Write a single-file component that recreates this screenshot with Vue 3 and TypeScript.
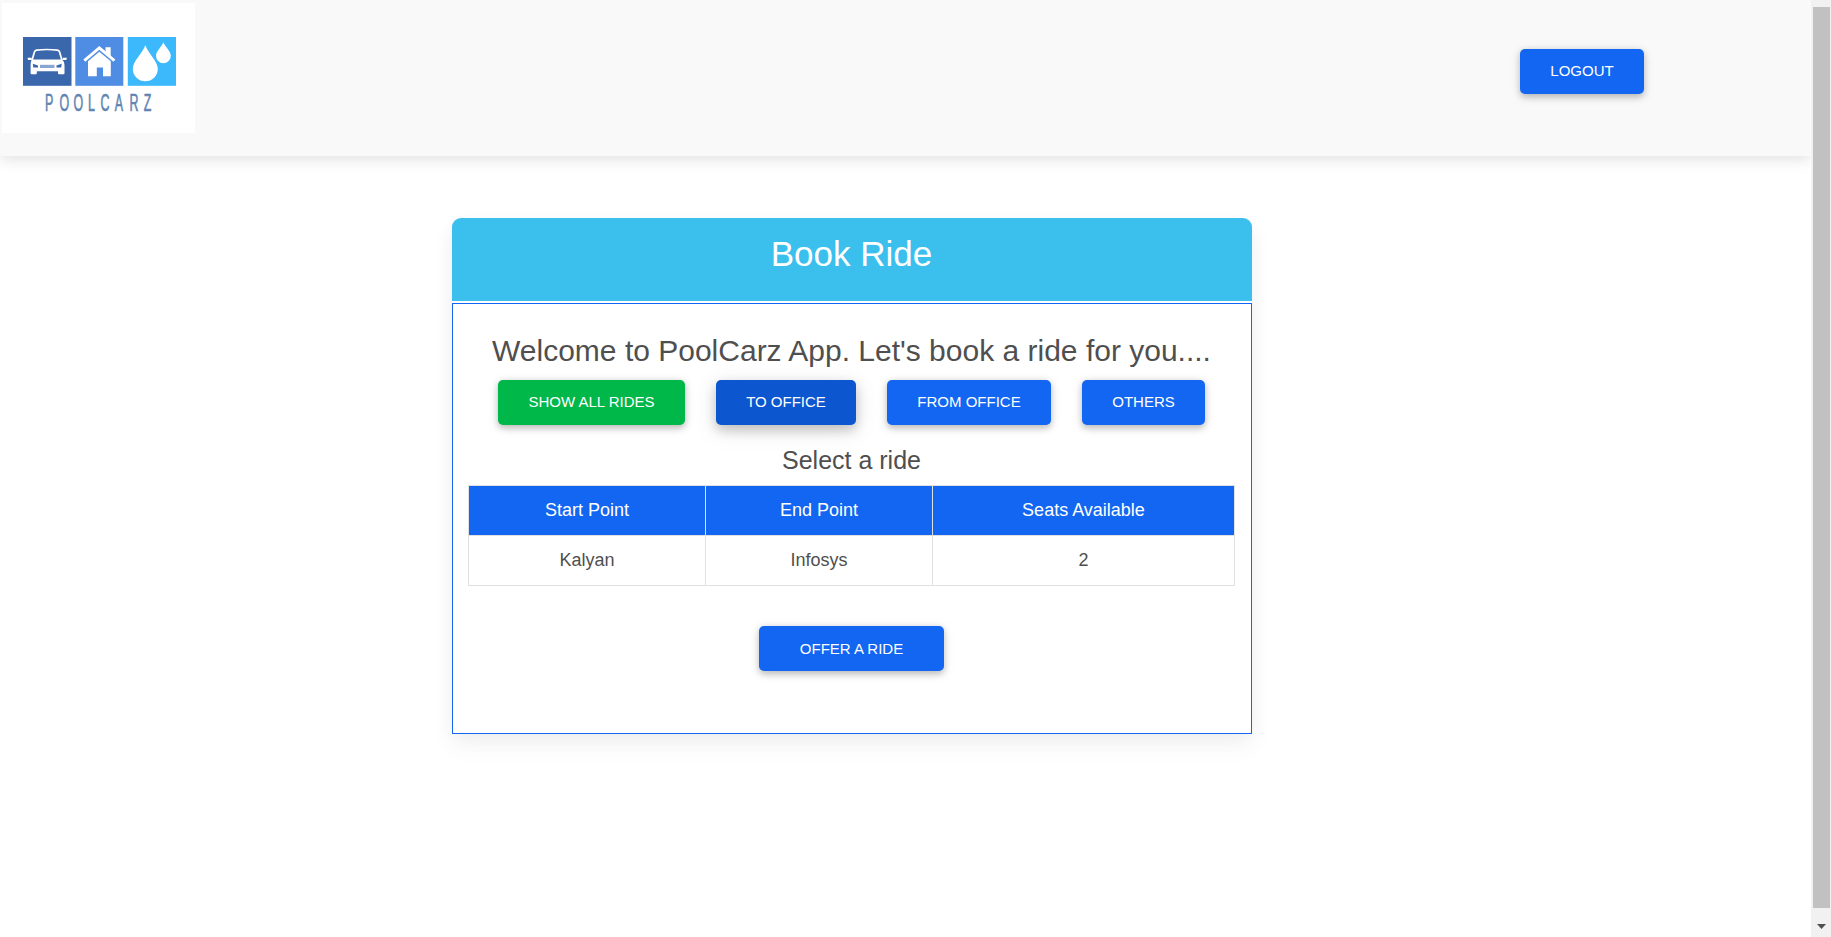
<script setup lang="ts">
interface Ride {
  start: string
  end: string
  seats: number
}

interface Filter {
  label: string
  kind: string
}

const filters: Filter[] = [
  { label: 'Show all rides', kind: 'success' },
  { label: 'To Office', kind: 'active' },
  { label: 'From Office', kind: 'primary' },
  { label: 'Others', kind: 'primary' },
]

const rides: Ride[] = [{ start: 'Kalyan', end: 'Infosys', seats: 2 }]
</script>

<template>
  <div class="screen">
    <div class="page">
      <header class="navbar">
        <svg class="logo" viewBox="0 0 193 130" width="193" height="130">
          <rect width="193" height="130" fill="#fff" />
          <g transform="translate(-2 -3)">
            <rect x="23" y="37" width="48.5" height="48.8" fill="#3a67ac" />
            <rect x="75.3" y="37" width="48" height="48.8" fill="#4f8ce3" />
            <rect x="127.8" y="37" width="48.2" height="48.8" fill="#3bb9fc" />
            <path
              d="M32 60.500 34.400 52Q34.900 50.300 36.600 50.100Q47 48.900 57.400 50.100Q59.100 50.300 59.600 52L62 60.500"
              fill="none" stroke="#fff" stroke-width="1.700"
            />
            <path
              d="M27.500 57.800h4.200v2.200h-3.600zM66.900 57.800h-4.200v2.200h3.600zM32 59.500h30q2.500 2 2.500 5.500v8.200q0 1-1 1h-4.500q-1 0-1-1v-1.900H36.800v1.900q0 1-1 1h-4.200q-1 0-1-1V65q0-3.500 1.400-5.500z"
              fill="#fff"
            />
            <path d="M32.800 63.700l5.200 1.700v2.200h-4.700zM61.700 63.700l-5.200 1.700v2.200h4.700z" fill="#3a67ac" />
            <path d="M40 64.800h14.500v3.200H40z" fill="#8aa6d0" />
            <path d="M84.300 60.600 99.300 48 114.400 60.600" fill="none" stroke="#fff" stroke-width="2.900" />
            <path d="M105.500 47.200h5.200v10l-5.200-4.400zM88 61.300 99.300 51.800l11.500 9.500v15H103v-8.800h-6.200v8.800H88z" fill="#fff" />
            <path d="M145.300 45.200C148.500 54 157.800 61 157.800 69a12.500 12.200 0 0 1-25 0c0-8 9.300-15 12.500-23.800z" fill="#fff" />
            <path d="M163.400 42.300c1.700 4.800 7.400 8.700 7.400 13.500a7.400 7.400 0 0 1-14.800 0c0-4.800 5.700-8.700 7.400-13.500z" fill="#fff" />
            <text
              transform="translate(45 110.500) scale(.54 1)"
              x="0 27 53 79.500 103 129 156.500 183" y="0"
              class="logo-text"
            >POOLCARZ</text>
          </g>
        </svg>
        <button type="button" class="btn primary logout">Logout</button>
      </header>

      <main class="card">
        <h2 class="card-title">Book Ride</h2>
        <section class="card-body">
          <h3 class="welcome">Welcome to PoolCarz App. Let's book a ride for you....</h3>
          <div class="filters">
            <button v-for="f in filters" :key="f.label" type="button" class="btn" :class="f.kind">{{ f.label }}</button>
          </div>
          <h4 class="subtitle">Select a ride</h4>
          <table class="rides">
            <colgroup>
              <col class="col-start" />
              <col class="col-end" />
              <col />
            </colgroup>
            <thead>
              <tr>
                <th>Start Point</th>
                <th>End Point</th>
                <th>Seats Available</th>
              </tr>
            </thead>
            <tbody>
              <tr v-for="r in rides" :key="r.start">
                <td>{{ r.start }}</td>
                <td>{{ r.end }}</td>
                <td>{{ r.seats }}</td>
              </tr>
            </tbody>
          </table>
          <button type="button" class="btn primary offer">Offer a ride</button>
        </section>
      </main>
    </div>

    <div class="scrollbar">
      <div class="thumb"></div>
      <svg class="arrow" width="9" height="5" viewBox="0 0 9 5"><path d="M0 0h9L4.500 5z" fill="#505050" /></svg>
    </div>
  </div>
</template>

<style>
body {
  margin: 0;
  background: #fff;
}
</style>

<style scoped>
.screen {
  display: grid;
  grid-template-columns: 1811px 20px;
  height: 937px;
  overflow: hidden;
  color: #4f4f4f;
  font-family: Arial, 'Liberation Sans', sans-serif;
}
.page {
  overflow: hidden;
}
.navbar {
  display: flex;
  align-items: flex-start;
  justify-content: space-between;
  box-sizing: border-box;
  height: 156px;
  padding: 3px 167px 0 2px;
  background: #f9f9f9;
  box-shadow: 0 5px 15px 0 rgba(0, 0, 0, 0.07), 0 2px 12px 0 rgba(0, 0, 0, 0.05);
}
.logo {
  display: block;
}
.logo-text {
  font-family: 'Liberation Sans', Arial, sans-serif;
  font-size: 23px;
  fill: #5d83b1;
  stroke: #5d83b1;
  stroke-width: 0.6px;
}
.btn {
  box-sizing: border-box;
  height: 45px;
  padding: 0 30px 1px;
  border: 0;
  border-radius: 5px;
  color: #fff;
  font-family: inherit;
  font-size: 15px;
  line-height: 44px;
  text-align: center;
  text-transform: uppercase;
  white-space: nowrap;
  box-shadow: 0 2.5px 6px 0 rgba(0, 0, 0, 0.2), 0 2.5px 12px 0 rgba(0, 0, 0, 0.1);
}
.primary {
  background: #1266f1;
}
.success {
  background: #00b74a;
}
.active {
  background: #0c56d0;
  box-shadow: 0 5px 12px 0 rgba(0, 0, 0, 0.2), 0 5px 25px 0 rgba(0, 0, 0, 0.1);
}
.logout {
  margin-top: 46px;
  width: 124px;
}
.card {
  width: 800px;
  margin: 62px 0 0 452px;
  border-radius: 10px 10px 0 0;
  box-shadow: 0 12px 25px 0 rgba(0, 0, 0, 0.05), 0 2px 18px 0 rgba(0, 0, 0, 0.03);
}
.card-title {
  box-sizing: border-box;
  height: 83px;
  margin: 0;
  padding: 15px 1px 0 0;
  border-radius: 9px 9px 0 0;
  background: #3bc0ee;
  color: #fff;
  font-size: 35px;
  font-weight: 400;
  line-height: 42px;
  text-align: center;
}
.card-body {
  display: flex;
  flex-direction: column;
  align-items: center;
  box-sizing: border-box;
  height: 431px;
  margin-top: 2px;
  padding: 29px 1px 0 0;
  border: 1px solid #1266f1;
  background: #fff;
}
.welcome {
  margin: 0 0 11px;
  font-size: 30px;
  font-weight: 400;
  line-height: 36px;
  white-space: nowrap;
}
.filters {
  display: grid;
  grid-template-columns: 187px 140px 164px 123px;
  gap: 31px;
}
.filters .btn {
  padding: 0 0 1px;
}
.subtitle {
  margin: 20px 0 10px;
  font-size: 25px;
  font-weight: 400;
  line-height: 30px;
}
.rides {
  width: 767px;
  border-collapse: collapse;
  table-layout: fixed;
  font-size: 18px;
  text-align: center;
}
.col-start {
  width: 237px;
}
.col-end {
  width: 227px;
}
.rides th,
.rides td {
  box-sizing: border-box;
  height: 50px;
  padding: 0;
  border: 1px solid #e0e0e0;
  font-weight: 400;
}
.rides th {
  background: #1266f1;
  color: #fff;
}
.offer {
  width: 185px;
  margin-top: 40px;
  padding: 1px 0 0;
}
.scrollbar {
  display: flex;
  flex-direction: column;
  justify-content: space-between;
  box-sizing: border-box;
  padding: 7px 1px 8px 2px;
  background: #f1f1f1;
}
.thumb {
  height: 901px;
  background: #c1c1c1;
}
.arrow {
  display: block;
  margin-left: 4px;
}
</style>
